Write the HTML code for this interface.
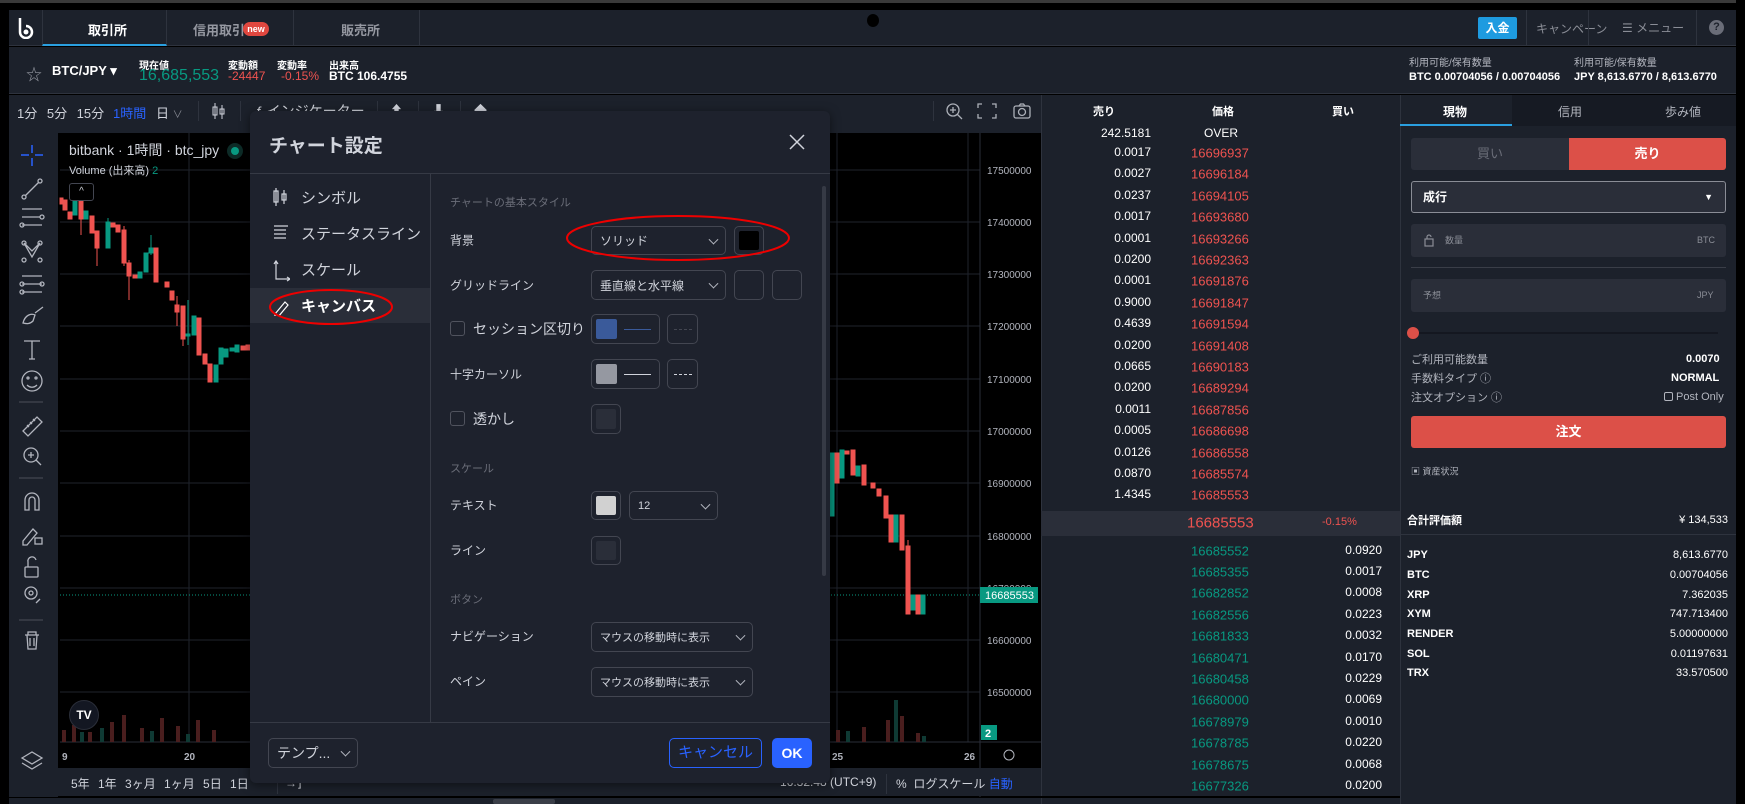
<!DOCTYPE html>
<html><head><meta charset="utf-8">
<style>
*{box-sizing:border-box;margin:0;padding:0}
body{width:1745px;height:804px;background:#000;overflow:hidden;font-family:"Liberation Sans","Noto Sans CJK JP",sans-serif;color:#d1d4dc;position:relative}
.a{position:absolute;white-space:nowrap}
.pan{background:#1c212b}
.b{font-weight:bold}
.sel{position:absolute;border:1px solid #434651;border-radius:5px;color:#d1d4dc;font-size:12px;padding-left:8px;display:flex;align-items:center}
.sel .cv{position:absolute;right:8px;top:50%;width:7px;height:7px;border-right:1.5px solid #b2b5be;border-bottom:1.5px solid #b2b5be;transform:translateY(-70%) rotate(45deg)}
.cb{position:absolute;border:1px solid #434651;border-radius:5px}
.cb i{position:absolute;left:4px;top:4px;right:4px;bottom:4px;border-radius:2px}
.lbl{position:absolute;font-size:12px;color:#d1d4dc;transform:translateY(-50%)}
.sec{position:absolute;font-size:11px;color:#6a6d78;transform:translateY(-50%)}
.ob{position:absolute;font-size:12px;transform:translateY(-50%)}
.rp{position:absolute;font-size:11px;transform:translateY(-50%)}
</style></head><body>
<div class="a" style="left:0;top:0;width:1745px;height:3px;background:#3a3a3a"></div>
<!-- top bar -->
<div class="a pan" style="left:9px;top:10px;width:1727px;height:36px;border-bottom:1px solid #2e333e"></div>
<svg class="a" style="left:16px;top:17px" width="20" height="22" viewBox="0 0 20 22"><path d="M4 1v14a6 6 0 1 0 6-6" fill="none" stroke="#fff" stroke-width="2.5"/><circle cx="10" cy="15" r="2.5" fill="#fff"/></svg>
<div class="a" style="left:42px;top:10px;width:125px;height:36px;border-left:1px solid #2e333e;border-right:1px solid #2e333e;border-bottom:2px solid #2a9fe0"></div>
<div class="a b" style="left:88px;top:20px;font-size:13px;color:#fff">取引所</div>
<div class="a" style="left:293px;top:10px;width:127px;height:36px;border-left:1px solid #2e333e;border-right:1px solid #2e333e"></div>
<div class="a b" style="left:193px;top:20px;font-size:13px;color:#9598a1">信用取引</div>
<div class="a b" style="left:243px;top:22px;width:26px;height:14px;border-radius:7px;background:#e0473f;color:#fff;font-size:9px;text-align:center;line-height:14px">new</div>
<div class="a b" style="left:341px;top:20px;font-size:13px;color:#9598a1">販売所</div>
<div class="a" style="left:867px;top:14px;width:12px;height:13px;border-radius:50%;background:#000"></div>
<div class="a b" style="left:1478px;top:17px;width:39px;height:22px;background:#1e9be0;color:#fff;font-size:12px;text-align:center;line-height:22px;border-radius:2px">入金</div>
<div class="a" style="left:1526px;top:10px;width:1px;height:36px;background:#2e333e"></div>
<div class="a" style="left:1536px;top:20px;font-size:12px;color:#8a8d96">キャンペーン</div>
<div class="a" style="left:1588px;top:10px;width:1px;height:36px;background:#2e333e"></div>
<div class="a" style="left:1622px;top:19px;font-size:12px;color:#8a8d96">☰ メニュー</div>
<div class="a" style="left:1696px;top:10px;width:1px;height:36px;background:#2e333e"></div>
<div class="a b" style="left:1709px;top:20px;width:15px;height:15px;border-radius:50%;background:#6a6d78;color:#1c212b;font-size:11px;text-align:center;line-height:15px">?</div>
<!-- info bar -->
<div class="a pan" style="left:9px;top:47px;width:1727px;height:47px;border-bottom:1px solid #2e333e"></div>
<div class="a" style="left:26px;top:61px;font-size:16px;color:#9598a1">☆</div>
<div class="a b" style="left:52px;top:63px;font-size:13px;color:#fff">BTC/JPY ▾</div>
<div class="a b" style="left:139px;top:57px;font-size:10px;color:#fff">現在値</div>
<div class="a" style="left:139px;top:67px;font-size:16px;color:#089981">16,685,553</div>
<div class="a b" style="left:228px;top:57px;font-size:10px;color:#fff">変動額</div>
<div class="a" style="left:228px;top:69px;font-size:12px;color:#ef5350">-24447</div>
<div class="a b" style="left:277px;top:57px;font-size:10px;color:#fff">変動率</div>
<div class="a" style="left:281px;top:69px;font-size:12px;color:#ef5350">-0.15%</div>
<div class="a b" style="left:329px;top:57px;font-size:10px;color:#fff">出来高</div>
<div class="a b" style="left:329px;top:69px;font-size:12px;color:#fff">BTC 106.4755</div>
<div class="a" style="left:1409px;top:54px;font-size:10px;color:#b2b5be">利用可能/保有数量</div>
<div class="a b" style="left:1409px;top:71px;font-size:11px;color:#fff">BTC 0.00704056 / 0.00704056</div>
<div class="a" style="left:1574px;top:54px;font-size:10px;color:#b2b5be">利用可能/保有数量</div>
<div class="a b" style="left:1574px;top:71px;font-size:11px;color:#fff">JPY 8,613.6770 / 8,613.6770</div>
<!-- chart toolbar -->
<div class="a pan" style="left:9px;top:95px;width:1032px;height:38px"></div>
<div class="a" style="left:17px;top:103px;font-size:13px;color:#d1d4dc;word-spacing:6px">1分 5分 15分</div>
<div class="a" style="left:113px;top:103px;font-size:13px;color:#2962ff">1時間</div>
<div class="a" style="left:156px;top:103px;font-size:13px">日 <span style="color:#8a8d96;font-size:10px">∨</span></div>
<div class="a" style="left:198px;top:101px;width:1px;height:20px;background:#2e333e"></div>
<svg class="a" style="left:211px;top:101px" width="16" height="20"><path d="M4 2v16M11 4v14" stroke="#d1d4dc"/><rect x="2" y="6" width="4" height="8" fill="none" stroke="#d1d4dc"/><rect x="9" y="8" width="4" height="5" fill="none" stroke="#d1d4dc"/></svg>
<div class="a" style="left:240px;top:101px;width:1px;height:20px;background:#2e333e"></div>
<div class="a" style="left:255px;top:101px;font-size:14px;color:#d1d4dc">ƒ インジケーター</div>
<div class="a" style="left:377px;top:101px;width:1px;height:20px;background:#2e333e"></div>
<div class="a" style="left:390px;top:100px;font-size:13px">⬆</div>
<div class="a" style="left:418px;top:101px;width:1px;height:20px;background:#2e333e"></div>
<div class="a" style="left:432px;top:100px;font-size:13px">⬇</div>
<div class="a" style="left:460px;top:101px;width:1px;height:20px;background:#2e333e"></div>
<div class="a" style="left:474px;top:100px;font-size:13px">◆</div>
<div class="a" style="left:933px;top:101px;width:1px;height:20px;background:#2e333e"></div>
<svg class="a" style="left:944px;top:101px;opacity:.8" width="90" height="20" fill="none" stroke="#d1d4dc" stroke-width="1.3"><circle cx="9" cy="9" r="6"/><path d="M13 13l5 5M6 9h6M9 6v6"/><path d="M38 3h-4v4M48 3h4v4M38 17h-4v-4M48 17h4v-4"/><rect x="70" y="5" width="16" height="12" rx="2"/><circle cx="78" cy="11" r="3.5"/><path d="M75 5l1.5-2h3l1.5 2"/></svg>
<!-- left toolbar -->
<div class="a pan" style="left:9px;top:133px;width:49px;height:664px"></div>
<svg class="a" style="left:9px;top:133px" width="49" height="664" fill="none" stroke="#b2b5be" stroke-width="1.3">
<path d="M23 12v8M23 25v8M12 22h8M26 22h8" stroke="#2962ff" stroke-width="1.5"/>
<path d="M16 63l14-14"/><circle cx="15" cy="64" r="2"/><circle cx="31" cy="48" r="2"/>
<path d="M13 76h20M13 84h18M13 92h20"/><circle cx="33" cy="84" r="2"/><circle cx="13" cy="92" r="2"/>
<path d="M15 110l8 14 8-14 -8 8z"/><circle cx="15" cy="110" r="2"/><circle cx="31" cy="110" r="2"/><circle cx="15" cy="127" r="2"/><circle cx="31" cy="127" r="2"/>
<path d="M13 143h20M13 151h20M13 159h20"/><circle cx="13" cy="151" r="2"/><circle cx="33" cy="151" r="2"/><circle cx="13" cy="159" r="2"/>
<path d="M14 190c2-8 8-10 12-8l-2 6c-3 3-6 3-10 2zM26 180l8-6"/>
<path d="M15 208h16M23 208v18M20 226h6"/>
<circle cx="23" cy="248" r="10"/><circle cx="19" cy="245" r="1"/><circle cx="27" cy="245" r="1"/><path d="M18 252c3 3 7 3 10 0"/>
<path d="M10 269h24" stroke="#434651"/>
<path d="M14 298l14-14 5 5-14 14z M18 292l2 2M21 289l2 2M24 286l2 2"/>
<circle cx="22" cy="322" r="7"/><path d="M27 327l5 5M19 322h6M22 319v6"/>
<path d="M10 345h24" stroke="#434651"/>
<path d="M16 377v-10a7 7 0 0 1 14 0v10h-4v-10a3 3 0 0 0-6 0v10z"/>
<path d="M14 408l10-12 4 4-10 12h-4z"/><rect x="26" y="405" width="7" height="6"/>
<rect x="16" y="434" width="13" height="10" rx="1"/><path d="M19 434v-5a4 4 0 0 1 8-2"/>
<circle cx="22" cy="460" r="6"/><circle cx="22" cy="460" r="2"/><path d="M27 470l4-4"/>
<path d="M10 487h24" stroke="#434651"/>
<path d="M16 502h14M19 502v-3h8v3M18 502l1 14h8l1-14M21 505v8M25 505v8"/>
<path d="M13 625l10-6 10 6-10 6zM13 630l10 6 10-6"/>
</svg>
<!-- chart -->
<div class="a" style="left:60px;top:133px;width:920px;height:609px;background:#000"></div>
<svg class="a" style="left:60px;top:133px" width="981" height="664">
<g stroke="#1f232c" stroke-width="1">
<path d="M0 37h920M0 89h920M0 141h920M0 193h920M0 246h920M0 298h920M0 350h920M0 403h920M0 455h920M0 507h920M0 559h920"/>
<path d="M129 0v609M777 0v609M908 0v609"/>
</g>
<path d="M0 462h920" stroke="#089981" stroke-dasharray="1 2"/>
<path d="M920 0v664" stroke="#2a2e39"/>
<path d="M0 609h981" stroke="#2a2e39"/>
<g font-size="10" fill="#b2b5be" font-family="Liberation Sans">
<text x="927" y="41">17500000</text><text x="927" y="93">17400000</text><text x="927" y="145">17300000</text><text x="927" y="197">17200000</text><text x="927" y="250">17100000</text><text x="927" y="302">17000000</text><text x="927" y="354">16900000</text><text x="927" y="407">16800000</text><text x="927" y="459">16700000</text><text x="927" y="511">16600000</text><text x="927" y="563">16500000</text>
<text x="2" y="627" font-weight="bold">9</text><text x="124" y="627" font-weight="bold">20</text><text x="772" y="627" font-weight="bold">25</text><text x="904" y="627" font-weight="bold">26</text>
</g>
<rect x="920" y="454" width="58" height="16" fill="#089981"/><text x="925" y="466" font-size="11" fill="#fff" font-family="Liberation Sans">16685553</text>
<rect x="921" y="592" width="16" height="15" fill="#089981"/><text x="925" y="604" font-size="11" fill="#fff" font-weight="bold" font-family="Liberation Sans">2</text>
<circle cx="949" cy="622" r="5" fill="none" stroke="#b2b5be"/>
</svg>
<svg class="a" style="left:0;top:0" width="1000" height="760">
<g fill="#ef5350" stroke="#ef5350">
<rect x="60" y="198" width="3" height="6"/><rect x="63" y="200" width="4" height="10"/><rect x="68" y="212" width="4" height="7"/><rect x="79" y="195" width="4" height="24"/><path d="M81 195v40"/><rect x="90" y="216" width="4" height="17"/><rect x="95" y="231" width="4" height="17"/><path d="M97 231v35"/><rect x="111" y="223" width="4" height="4"/><rect x="116" y="225" width="4" height="7"/><rect x="122" y="230" width="4" height="33"/><path d="M124 226v40"/><rect x="127" y="263" width="4" height="13"/><path d="M129 260v40"/><rect x="133" y="275" width="4" height="3"/><rect x="154" y="248" width="4" height="34"/><rect x="165" y="282" width="4" height="5"/><rect x="170" y="291" width="4" height="9"/><rect x="175" y="305" width="4" height="7"/><path d="M177 296v30"/><rect x="181" y="306" width="4" height="33"/><path d="M183 306v40"/><rect x="197" y="318" width="4" height="37"/><rect x="203" y="354" width="4" height="10"/><rect x="208" y="364" width="4" height="18"/><rect x="241" y="346" width="4" height="4"/><rect x="246" y="345" width="4" height="5"/>
<rect x="835" y="453" width="4" height="30"/><rect x="845" y="451" width="4" height="3"/><rect x="851" y="450" width="4" height="25"/><rect x="862" y="465" width="4" height="20"/><rect x="871" y="483" width="4" height="5"/><rect x="877" y="489" width="4" height="7"/><rect x="884" y="496" width="4" height="22"/><rect x="889" y="515" width="4" height="27"/><rect x="900" y="515" width="4" height="35"/><rect x="906" y="546" width="4" height="68"/><path d="M908 540v70"/><rect x="916" y="595" width="4" height="19"/>
</g>
<g fill="#089981" stroke="#089981">
<rect x="73" y="196" width="4" height="19"/><rect x="84" y="211" width="4" height="8"/><rect x="106" y="222" width="4" height="26"/><path d="M108 218v30"/><rect x="138" y="272" width="4" height="6"/><rect x="144" y="253" width="4" height="19"/><rect x="149" y="248" width="4" height="5"/><path d="M151 235v20"/><rect x="186" y="334" width="4" height="2"/><path d="M188 300v45"/><rect x="192" y="316" width="4" height="19"/><rect x="214" y="365" width="4" height="17"/><rect x="219" y="348" width="4" height="16"/><rect x="224" y="349" width="4" height="8"/><rect x="230" y="348" width="4" height="3"/><rect x="235" y="345" width="4" height="7"/>
<rect x="830" y="453" width="4" height="63"/><rect x="840" y="450" width="4" height="28"/><rect x="856" y="466" width="4" height="10"/><rect x="894" y="515" width="4" height="27"/><rect x="911" y="595" width="4" height="15"/><rect x="921" y="595" width="4" height="19"/>
</g>
<g fill="#4a1e1e"><rect x="62" y="730" width="4" height="12"/><rect x="72" y="725" width="4" height="17"/><rect x="88" y="732" width="4" height="10"/><rect x="110" y="722" width="4" height="20"/><rect x="122" y="715" width="4" height="27"/><rect x="140" y="728" width="4" height="14"/><rect x="160" y="718" width="4" height="24"/><rect x="176" y="726" width="4" height="16"/><rect x="196" y="720" width="4" height="22"/><rect x="212" y="730" width="4" height="12"/><rect x="836" y="730" width="4" height="12"/><rect x="862" y="727" width="4" height="15"/><rect x="886" y="720" width="4" height="22"/><rect x="900" y="716" width="4" height="26"/><rect x="916" y="733" width="4" height="9"/></g>
<g fill="#0f3a34"><rect x="80" y="732" width="4" height="10"/><rect x="100" y="728" width="4" height="14"/><rect x="150" y="731" width="4" height="11"/><rect x="186" y="734" width="4" height="8"/><rect x="846" y="731" width="4" height="11"/><rect x="894" y="700" width="4" height="42"/><rect x="922" y="736" width="4" height="6"/></g>
</svg>
<div class="a" style="left:69px;top:140px;font-size:14px;color:#d1d4dc">bitbank · 1時間 · btc_jpy <span style="display:inline-block;width:8px;height:8px;border-radius:50%;background:#089981;box-shadow:0 0 0 4px #0d2b27;margin-left:8px"></span></div>
<div class="a" style="left:69px;top:162px;font-size:11px;color:#d1d4dc">Volume (出来高) <span style="color:#089981">2</span></div>
<div class="a" style="left:69px;top:183px;width:25px;height:18px;border:1px solid #434651;border-radius:3px;font-size:10px;text-align:center;line-height:16px;background:#000">^</div>
<div class="a" style="left:69px;top:700px;width:30px;height:30px;border-radius:50%;background:#131722;border:1px solid #2a2e39;color:#fff;font-size:12px;font-weight:bold;text-align:center;line-height:28px">TV</div>
<!-- bottom bar -->
<div class="a pan" style="left:58px;top:768px;width:983px;height:28px"></div>
<div class="a" style="left:71px;top:775px;font-size:12px;color:#d1d4dc;word-spacing:5px">5年 1年 3ヶ月 1ヶ月 5日 1日</div>
<div class="a" style="left:277px;top:774px;width:1px;height:20px;background:#2e333e"></div>
<div class="a" style="left:285px;top:776px;font-size:12px">→⌋</div>
<div class="a" style="left:780px;top:775px;font-size:12px">16:32:48 (UTC+9)</div>
<div class="a" style="left:886px;top:774px;width:1px;height:20px;background:#2e333e"></div>
<div class="a" style="left:896px;top:775px;font-size:12px">%&nbsp; ログスケール <span style="color:#2962ff">自動</span></div>
<div class="a" style="left:9px;top:798px;width:1032px;height:6px;background:#1c212b"></div>
<div class="a" style="left:493px;top:799px;width:62px;height:5px;background:#3a3e48;border-radius:2px"></div>
<!-- order book -->
<div class="a pan" style="left:1041px;top:95px;width:359px;height:709px;border-left:1px solid #2e333e"></div>
<div class="a b" style="left:1093px;top:103px;font-size:11px;color:#fff">売り</div>
<div class="a b" style="left:1212px;top:103px;font-size:11px;color:#fff">価格</div>
<div class="a b" style="left:1332px;top:103px;font-size:11px;color:#fff">買い</div>
<div class="ob" style="left:1100px;top:133px;width:51px;text-align:right;color:#fff">242.5181</div>
<div class="ob" style="left:1200px;top:133px;width:42px;text-align:center;color:#fff">OVER</div>
<div class="a" style="left:1041px;top:511px;width:359px;height:25px;background:#2a2e39"></div>
<div class="ob" style="left:1187px;top:523px;font-size:15px;color:#ef5350">16685553</div>
<div class="ob" style="left:1322px;top:522px;font-size:11px;color:#ef5350">-0.15%</div>
<!-- sells -->
<div class="ob" style="left:1110px;top:152px;width:41px;text-align:right;color:#fff">0.0017</div><div class="ob" style="left:1191px;top:153px;font-size:13px;color:#ef5350">16696937</div>
<div class="ob" style="left:1110px;top:173px;width:41px;text-align:right;color:#fff">0.0027</div><div class="ob" style="left:1191px;top:174px;font-size:13px;color:#ef5350">16696184</div>
<div class="ob" style="left:1110px;top:195px;width:41px;text-align:right;color:#fff">0.0237</div><div class="ob" style="left:1191px;top:196px;font-size:13px;color:#ef5350">16694105</div>
<div class="ob" style="left:1110px;top:216px;width:41px;text-align:right;color:#fff">0.0017</div><div class="ob" style="left:1191px;top:217px;font-size:13px;color:#ef5350">16693680</div>
<div class="ob" style="left:1110px;top:238px;width:41px;text-align:right;color:#fff">0.0001</div><div class="ob" style="left:1191px;top:239px;font-size:13px;color:#ef5350">16693266</div>
<div class="ob" style="left:1110px;top:259px;width:41px;text-align:right;color:#fff">0.0200</div><div class="ob" style="left:1191px;top:260px;font-size:13px;color:#ef5350">16692363</div>
<div class="ob" style="left:1110px;top:280px;width:41px;text-align:right;color:#fff">0.0001</div><div class="ob" style="left:1191px;top:281px;font-size:13px;color:#ef5350">16691876</div>
<div class="ob" style="left:1110px;top:302px;width:41px;text-align:right;color:#fff">0.9000</div><div class="ob" style="left:1191px;top:303px;font-size:13px;color:#ef5350">16691847</div>
<div class="ob" style="left:1110px;top:323px;width:41px;text-align:right;color:#fff">0.4639</div><div class="ob" style="left:1191px;top:324px;font-size:13px;color:#ef5350">16691594</div>
<div class="ob" style="left:1110px;top:345px;width:41px;text-align:right;color:#fff">0.0200</div><div class="ob" style="left:1191px;top:346px;font-size:13px;color:#ef5350">16691408</div>
<div class="ob" style="left:1110px;top:366px;width:41px;text-align:right;color:#fff">0.0665</div><div class="ob" style="left:1191px;top:367px;font-size:13px;color:#ef5350">16690183</div>
<div class="ob" style="left:1110px;top:387px;width:41px;text-align:right;color:#fff">0.0200</div><div class="ob" style="left:1191px;top:388px;font-size:13px;color:#ef5350">16689294</div>
<div class="ob" style="left:1110px;top:409px;width:41px;text-align:right;color:#fff">0.0011</div><div class="ob" style="left:1191px;top:410px;font-size:13px;color:#ef5350">16687856</div>
<div class="ob" style="left:1110px;top:430px;width:41px;text-align:right;color:#fff">0.0005</div><div class="ob" style="left:1191px;top:431px;font-size:13px;color:#ef5350">16686698</div>
<div class="ob" style="left:1110px;top:452px;width:41px;text-align:right;color:#fff">0.0126</div><div class="ob" style="left:1191px;top:453px;font-size:13px;color:#ef5350">16686558</div>
<div class="ob" style="left:1110px;top:473px;width:41px;text-align:right;color:#fff">0.0870</div><div class="ob" style="left:1191px;top:474px;font-size:13px;color:#ef5350">16685574</div>
<div class="ob" style="left:1110px;top:494px;width:41px;text-align:right;color:#fff">1.4345</div><div class="ob" style="left:1191px;top:495px;font-size:13px;color:#ef5350">16685553</div>
<!-- buys -->
<div class="ob" style="left:1191px;top:551px;font-size:13px;color:#089981">16685552</div><div class="ob" style="left:1340px;top:550px;width:42px;text-align:right;color:#fff">0.0920</div>
<div class="ob" style="left:1191px;top:572px;font-size:13px;color:#089981">16685355</div><div class="ob" style="left:1340px;top:571px;width:42px;text-align:right;color:#fff">0.0017</div>
<div class="ob" style="left:1191px;top:593px;font-size:13px;color:#089981">16682852</div><div class="ob" style="left:1340px;top:592px;width:42px;text-align:right;color:#fff">0.0008</div>
<div class="ob" style="left:1191px;top:615px;font-size:13px;color:#089981">16682556</div><div class="ob" style="left:1340px;top:614px;width:42px;text-align:right;color:#fff">0.0223</div>
<div class="ob" style="left:1191px;top:636px;font-size:13px;color:#089981">16681833</div><div class="ob" style="left:1340px;top:635px;width:42px;text-align:right;color:#fff">0.0032</div>
<div class="ob" style="left:1191px;top:658px;font-size:13px;color:#089981">16680471</div><div class="ob" style="left:1340px;top:657px;width:42px;text-align:right;color:#fff">0.0170</div>
<div class="ob" style="left:1191px;top:679px;font-size:13px;color:#089981">16680458</div><div class="ob" style="left:1340px;top:678px;width:42px;text-align:right;color:#fff">0.0229</div>
<div class="ob" style="left:1191px;top:700px;font-size:13px;color:#089981">16680000</div><div class="ob" style="left:1340px;top:699px;width:42px;text-align:right;color:#fff">0.0069</div>
<div class="ob" style="left:1191px;top:722px;font-size:13px;color:#089981">16678979</div><div class="ob" style="left:1340px;top:721px;width:42px;text-align:right;color:#fff">0.0010</div>
<div class="ob" style="left:1191px;top:743px;font-size:13px;color:#089981">16678785</div><div class="ob" style="left:1340px;top:742px;width:42px;text-align:right;color:#fff">0.0220</div>
<div class="ob" style="left:1191px;top:765px;font-size:13px;color:#089981">16678675</div><div class="ob" style="left:1340px;top:764px;width:42px;text-align:right;color:#fff">0.0068</div>
<div class="ob" style="left:1191px;top:786px;font-size:13px;color:#089981">16677326</div><div class="ob" style="left:1340px;top:785px;width:42px;text-align:right;color:#fff">0.0200</div>
<div class="a" style="left:1041px;top:796px;width:359px;height:2px;background:#000"></div>
<!-- right panel -->
<div class="a pan" style="left:1400px;top:95px;width:336px;height:709px;border-left:1px solid #2e333e"></div>
<div class="a" style="left:1512px;top:95px;width:224px;height:31px;background:#161a23"></div>
<div class="a" style="left:1400px;top:124px;width:112px;height:2px;background:#2a9fe0"></div>
<div class="a b" style="left:1443px;top:103px;font-size:12px;color:#fff">現物</div>
<div class="a" style="left:1558px;top:103px;font-size:12px;color:#b2b5be">信用</div>
<div class="a" style="left:1665px;top:103px;font-size:12px;color:#b2b5be">歩み値</div>
<div class="a" style="left:1411px;top:138px;width:158px;height:32px;background:#2a2e39;border-radius:3px 0 0 3px;color:#6a6d78;font-size:13px;text-align:center;line-height:32px">買い</div>
<div class="a b" style="left:1569px;top:138px;width:157px;height:32px;background:#dc5048;border-radius:0 3px 3px 0;color:#fff;font-size:13px;text-align:center;line-height:32px">売り</div>
<div class="a b" style="left:1411px;top:181px;width:315px;height:32px;border:1px solid #8a8d96;border-radius:3px;background:#2a2e39;color:#fff;font-size:12px;line-height:30px;padding-left:11px">成行<span style="position:absolute;right:12px;font-size:9px">▼</span></div>
<div class="a" style="left:1411px;top:224px;width:315px;height:33px;background:#2a2e39;border-radius:3px"></div>
<svg class="a" style="left:1424px;top:233px" width="10" height="14" fill="none" stroke="#8a8d96" stroke-width="1.2"><rect x="1" y="6" width="8" height="7"/><path d="M3 6V4a2 2 0 0 1 4 0"/></svg>
<div class="rp" style="left:1445px;top:240px;font-size:9px;color:#8a8d96">数量</div>
<div class="rp" style="left:1697px;top:240px;font-size:9px;color:#8a8d96">BTC</div>
<div class="a" style="left:1411px;top:267px;width:315px;height:1px;background:#3a3e48"></div>
<div class="a" style="left:1411px;top:279px;width:315px;height:33px;background:#2a2e39;border-radius:3px"></div>
<div class="rp" style="left:1423px;top:295px;font-size:9px;color:#8a8d96">予想</div>
<div class="rp" style="left:1697px;top:295px;font-size:9px;color:#8a8d96">JPY</div>
<div class="a" style="left:1418px;top:332px;width:300px;height:2px;background:#141720"></div>
<div class="a" style="left:1407px;top:327px;width:12px;height:12px;border-radius:50%;background:#dc5048"></div>
<div class="rp" style="left:1411px;top:359px;font-size:11px;color:#b2b5be">ご利用可能数量</div><div class="rp b" style="left:1686px;top:359px;color:#fff">0.0070</div>
<div class="rp" style="left:1411px;top:378px;font-size:11px;color:#b2b5be">手数料タイプ ⓘ</div><div class="rp b" style="left:1671px;top:378px;color:#fff">NORMAL</div>
<div class="rp" style="left:1411px;top:397px;font-size:11px;color:#b2b5be">注文オプション ⓘ</div><div class="rp" style="left:1664px;top:397px;color:#b2b5be"><span style="display:inline-block;width:9px;height:9px;border:1px solid #b2b5be;border-radius:2px;vertical-align:-1px"></span> Post Only</div>
<div class="a b" style="left:1411px;top:416px;width:315px;height:32px;background:#dc5048;border-radius:3px;color:#fff;font-size:13px;text-align:center;line-height:32px">注文</div>
<div class="rp" style="left:1411px;top:471px;font-size:9px;color:#b2b5be">▣ 資産状況</div>
<div class="a" style="left:1400px;top:505px;width:336px;height:30px;border-bottom:1px solid #2e333e"></div>
<div class="rp b" style="left:1407px;top:520px;color:#fff">合計評価額</div><div class="rp" style="left:1670px;top:520px;width:58px;text-align:right;color:#fff">¥ 134,533</div>
<div class="rp b" style="left:1407px;top:555px;color:#fff">JPY</div><div class="rp" style="left:1620px;top:555px;width:108px;text-align:right;color:#fff">8,613.6770</div>
<div class="rp b" style="left:1407px;top:575px;color:#fff">BTC</div><div class="rp" style="left:1620px;top:575px;width:108px;text-align:right;color:#fff">0.00704056</div>
<div class="rp b" style="left:1407px;top:595px;color:#fff">XRP</div><div class="rp" style="left:1620px;top:595px;width:108px;text-align:right;color:#fff">7.362035</div>
<div class="rp b" style="left:1407px;top:614px;color:#fff">XYM</div><div class="rp" style="left:1620px;top:614px;width:108px;text-align:right;color:#fff">747.713400</div>
<div class="rp b" style="left:1407px;top:634px;color:#fff">RENDER</div><div class="rp" style="left:1620px;top:634px;width:108px;text-align:right;color:#fff">5.00000000</div>
<div class="rp b" style="left:1407px;top:654px;color:#fff">SOL</div><div class="rp" style="left:1620px;top:654px;width:108px;text-align:right;color:#fff">0.01197631</div>
<div class="rp b" style="left:1407px;top:673px;color:#fff">TRX</div><div class="rp" style="left:1620px;top:673px;width:108px;text-align:right;color:#fff">33.570500</div>
<div class="a" style="left:1736px;top:0;width:9px;height:804px;background:#000"></div>
<!-- modal -->
<div class="a" style="left:250px;top:111px;width:580px;height:672px;background:#1e222d;border-radius:6px;box-shadow:0 2px 10px rgba(0,0,0,.5)"></div>
<div class="a b" style="left:269px;top:131px;font-size:19px;color:#d1d4dc">チャート設定</div>
<svg class="a" style="left:789px;top:134px" width="16" height="16"><path d="M1 1l14 14M15 1L1 15" stroke="#d1d4dc" stroke-width="1.5"/></svg>
<div class="a" style="left:250px;top:173px;width:580px;height:1px;background:#363a45"></div>
<div class="a" style="left:430px;top:174px;width:1px;height:548px;background:#363a45"></div>
<div class="a" style="left:250px;top:288px;width:180px;height:35px;background:#2a2e39"></div>
<svg class="a" style="left:272px;top:186px" width="18" height="130" fill="none" stroke="#d1d4dc" stroke-width="1.2">
<path d="M4 2v18M12 4v14"/><rect x="2" y="5" width="4" height="11"/><rect x="10" y="8" width="4" height="6"/>
<path d="M2 40h14M2 44h12M2 48h12M2 52h12"/>
<path d="M4 75v18h14M2 78l2-3 2 3M15 91l3 2-3 2"/>
<path d="M3 128l10-12 3 3-10 12h-3z" stroke="#fff"/>
</svg>
<div class="a" style="left:301px;top:187px;font-size:15px;color:#d1d4dc">シンボル</div>
<div class="a" style="left:301px;top:223px;font-size:15px;color:#d1d4dc">ステータスライン</div>
<div class="a" style="left:301px;top:259px;font-size:15px;color:#d1d4dc">スケール</div>
<div class="a b" style="left:301px;top:295px;font-size:15px;color:#fff">キャンバス</div>
<div class="sec" style="left:450px;top:202px">チャートの基本スタイル</div>
<div class="lbl" style="left:450px;top:240px">背景</div>
<div class="sel" style="left:591px;top:226px;width:135px;height:29px">ソリッド<span class="cv"></span></div>
<div class="cb" style="left:734px;top:226px;width:30px;height:29px"><i style="background:#000"></i></div>
<div class="lbl" style="left:450px;top:285px">グリッドライン</div>
<div class="sel" style="left:591px;top:270px;width:135px;height:30px">垂直線と水平線<span class="cv"></span></div>
<div class="cb" style="left:734px;top:270px;width:30px;height:30px"></div>
<div class="cb" style="left:772px;top:270px;width:30px;height:30px"></div>
<div class="a" style="left:450px;top:321px;width:15px;height:15px;border:1px solid #50535e;border-radius:3px"></div>
<div class="lbl" style="left:473px;top:329px;font-size:14px">セッション区切り</div>
<div class="cb" style="left:591px;top:314px;width:69px;height:30px"><i style="right:auto;width:21px;background:#3a5a9a"></i><span style="position:absolute;left:32px;top:14px;width:27px;height:1px;background:#3a5a9a"></span></div>
<div class="cb" style="left:667px;top:314px;width:31px;height:30px"><span style="position:absolute;left:6px;top:14px;width:18px;border-top:1px dashed #434651"></span></div>
<div class="lbl" style="left:450px;top:374px">十字カーソル</div>
<div class="cb" style="left:591px;top:359px;width:69px;height:30px"><i style="right:auto;width:21px;background:#9598a1"></i><span style="position:absolute;left:32px;top:14px;width:27px;height:1px;background:#d1d4dc"></span></div>
<div class="cb" style="left:667px;top:359px;width:31px;height:30px"><span style="position:absolute;left:6px;top:14px;width:18px;border-top:1.5px dashed #d1d4dc"></span></div>
<div class="a" style="left:450px;top:411px;width:15px;height:15px;border:1px solid #50535e;border-radius:3px"></div>
<div class="lbl" style="left:473px;top:419px;font-size:14px">透かし</div>
<div class="cb" style="left:591px;top:404px;width:30px;height:30px"><i style="background:#2a2e39"></i></div>
<div class="sec" style="left:450px;top:468px">スケール</div>
<div class="lbl" style="left:450px;top:505px">テキスト</div>
<div class="cb" style="left:591px;top:491px;width:30px;height:29px"><i style="background:#d1d1d1"></i></div>
<div class="sel" style="left:629px;top:491px;width:89px;height:29px;font-size:11px">12<span class="cv"></span></div>
<div class="lbl" style="left:450px;top:550px">ライン</div>
<div class="cb" style="left:591px;top:536px;width:30px;height:29px"><i style="background:#2a2e39"></i></div>
<div class="sec" style="left:450px;top:599px">ボタン</div>
<div class="lbl" style="left:450px;top:636px">ナビゲーション</div>
<div class="sel" style="left:591px;top:622px;width:162px;height:30px;font-size:11px">マウスの移動時に表示<span class="cv"></span></div>
<div class="lbl" style="left:450px;top:681px">ペイン</div>
<div class="sel" style="left:591px;top:667px;width:162px;height:30px;font-size:11px">マウスの移動時に表示<span class="cv"></span></div>
<div class="a" style="left:822px;top:186px;width:4px;height:390px;background:#363a45;border-radius:2px"></div>
<div class="a" style="left:250px;top:722px;width:580px;height:1px;background:#363a45"></div>
<div class="sel" style="left:268px;top:738px;width:90px;height:30px;font-size:14px">テンプ...<span class="cv"></span></div>
<div class="a" style="left:669px;top:738px;width:93px;height:30px;border:1px solid #2962ff;border-radius:5px;color:#2962ff;font-size:15px;text-align:center;line-height:28px">キャンセル</div>
<div class="a b" style="left:772px;top:738px;width:40px;height:30px;background:#2962ff;border-radius:5px;color:#fff;font-size:14px;text-align:center;line-height:30px">OK</div>
<!-- red annotations -->
<svg class="a" style="left:0;top:0" width="900" height="400"><ellipse cx="678" cy="238" rx="111" ry="22" fill="none" stroke="#e00" stroke-width="2"/><ellipse cx="331" cy="307" rx="61" ry="17" fill="none" stroke="#e00" stroke-width="2"/></svg>
</body></html>
